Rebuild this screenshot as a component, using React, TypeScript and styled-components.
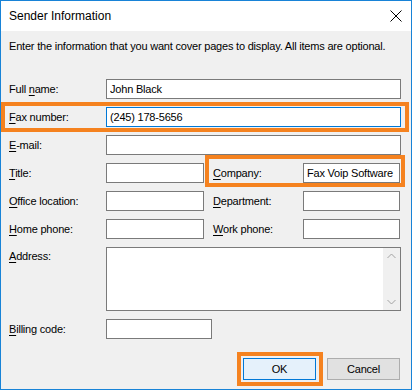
import React from "react";
import styled, { createGlobalStyle } from "styled-components";

const GlobalStyle = createGlobalStyle`
  body {
    margin: 0;
    font-family: "Liberation Sans", Arial, sans-serif;
    font-size: 11px;
    letter-spacing: -0.2px;
    color: #000;
    background: #fff;
  }
  * { box-sizing: border-box; }
`;

const Window = styled.div`
  width: 412px;
  height: 390px;
  border: 1px solid #1883d7;
  background: #f0f0f0;
  display: flex;
  flex-direction: column;
`;

const TitleBar = styled.div`
  height: 30px;
  background: #fff;
  display: flex;
  align-items: center;
  justify-content: space-between;
  padding: 0 9px 0 8px;
`;

const Title = styled.div`
  font-size: 12px;
  letter-spacing: 0;
`;

const CloseIcon = styled.svg`
  width: 12px;
  height: 12px;
  display: block;
`;

const Body = styled.div`
  flex: 1;
  padding: 7px 10px 0 8px;
  display: flex;
  flex-direction: column;
`;

const Intro = styled.p`
  margin: 0;
  line-height: 16px;
  white-space: nowrap;
`;

const Form = styled.div`
  margin-top: 25px;
  display: flex;
  flex-direction: column;
  gap: 8px;
`;

const Row = styled.div`
  display: flex;
`;

const Field = styled.div<{ $grow?: boolean }>`
  display: flex;
  align-items: center;
  flex: ${({ $grow }) => ($grow ? "1" : "none")};
`;

const Highlight = styled.div<{ $inset: string; $grow?: boolean }>`
  position: relative;
  display: flex;
  flex: ${({ $grow }) => ($grow ? "1" : "none")};

  &::after {
    content: "";
    position: absolute;
    inset: ${({ $inset }) => $inset};
    border: 4px solid #f5821f;
    pointer-events: none;
  }
`;

const Label = styled.label<{ $width: number; $indent?: number; $top?: boolean }>`
  width: ${({ $width }) => $width}px;
  padding-left: ${({ $indent }) => $indent ?? 0}px;
  flex: none;
  line-height: 16px;
  align-self: ${({ $top }) => ($top ? "flex-start" : "center")};
  padding-top: ${({ $top }) => ($top ? "1px" : "0")};
  white-space: nowrap;
`;

const Key = styled.u`
  text-decoration: underline;
  text-underline-offset: 2px;
`;

const TextBox = styled.input<{ $width?: number; $focused?: boolean }>`
  height: 20px;
  width: ${({ $width }) => ($width ? `${$width}px` : "auto")};
  flex: ${({ $width }) => ($width ? "none" : "1")};
  min-width: 0;
  border: 1px solid ${({ $focused }) => ($focused ? "#0078d7" : "#7a7a7a")};
  background: #fff;
  padding: 0 3px;
  margin: 0;
  font-family: "Liberation Sans", Arial, sans-serif;
  font-size: 11px;
  letter-spacing: -0.2px;
  color: #000;
  outline: none;
`;

const AddressBox = styled.div`
  flex: 1;
  height: 64px;
  border: 1px solid #7a7a7a;
  background: #fff;
  display: flex;
  justify-content: flex-end;
`;

const ScrollTrack = styled.div`
  width: 17px;
  background: #f0f0f0;
  display: flex;
  flex-direction: column;
  justify-content: space-between;
  align-items: center;
  padding: 5px 0;
`;

const Chevron = styled.svg`
  width: 9px;
  height: 6px;
  display: block;
`;

const Footer = styled.div`
  margin-top: 19px;
  display: flex;
  justify-content: flex-end;
  gap: 11px;
  padding-right: 1px;
`;

const Button = styled.button<{ $primary?: boolean }>`
  width: 73px;
  height: 22px;
  padding: 0;
  border: 1px solid ${({ $primary }) => ($primary ? "#0078d7" : "#adadad")};
  background: ${({ $primary }) => ($primary ? "#e5f1fb" : "#e1e1e1")};
  font-family: "Liberation Sans", Arial, sans-serif;
  font-size: 11px;
  letter-spacing: -0.2px;
  color: #000;
`;

const FULL_INSET = "-5px -8px -5px -8px";
const COMPANY_INSET = "-8px -5px -4px 1px";
const OK_INSET = "-6px -7px -6px -6px";

export default function App() {
  return (
    <>
      <GlobalStyle />
      <Window>
        <TitleBar>
          <Title>Sender Information</Title>
          <CloseIcon viewBox="0 0 12 12">
            <path d="M0.5 0.5 L11.5 11.5 M11.5 0.5 L0.5 11.5" stroke="#000" strokeWidth="1" />
          </CloseIcon>
        </TitleBar>
        <Body>
          <Intro>
            Enter the information that you want cover pages to display. All items are optional.
          </Intro>
          <Form>
            <Row>
              <Field $grow>
                <Label $width={97}>
                  Full <Key>n</Key>ame:
                </Label>
                <TextBox defaultValue="John Black" readOnly />
              </Field>
            </Row>
            <Row>
              <Highlight $inset={FULL_INSET} $grow>
                <Field $grow>
                  <Label $width={97}>
                    <Key>F</Key>ax number:
                  </Label>
                  <TextBox defaultValue="(245) 178-5656" readOnly $focused />
                </Field>
              </Highlight>
            </Row>
            <Row>
              <Field $grow>
                <Label $width={97}>
                  <Key>E</Key>-mail:
                </Label>
                <TextBox readOnly />
              </Field>
            </Row>
            <Row>
              <Field>
                <Label $width={97}>
                  <Key>T</Key>itle:
                </Label>
                <TextBox $width={98} readOnly />
              </Field>
              <Highlight $inset={COMPANY_INSET}>
                <Field>
                  <Label $width={99} $indent={9}>
                    <Key>C</Key>ompany:
                  </Label>
                  <TextBox $width={97} defaultValue="Fax Voip Software" readOnly />
                </Field>
              </Highlight>
            </Row>
            <Row>
              <Field>
                <Label $width={97}>
                  <Key>O</Key>ffice location:
                </Label>
                <TextBox $width={98} readOnly />
              </Field>
              <Field>
                <Label $width={99} $indent={9}>
                  <Key>D</Key>epartment:
                </Label>
                <TextBox $width={97} readOnly />
              </Field>
            </Row>
            <Row>
              <Field>
                <Label $width={97}>
                  <Key>H</Key>ome phone:
                </Label>
                <TextBox $width={98} readOnly />
              </Field>
              <Field>
                <Label $width={99} $indent={9}>
                  <Key>W</Key>ork phone:
                </Label>
                <TextBox $width={97} readOnly />
              </Field>
            </Row>
            <Row>
              <Field $grow>
                <Label $width={97} $top>
                  <Key>A</Key>ddress:
                </Label>
                <AddressBox>
                  <ScrollTrack>
                    <Chevron viewBox="0 0 9 6">
                      <path d="M0.5 5 L4.5 1 L8.5 5" fill="none" stroke="#a3a3a3" strokeWidth="1" />
                    </Chevron>
                    <Chevron viewBox="0 0 9 6">
                      <path d="M0.5 1 L4.5 5 L8.5 1" fill="none" stroke="#a3a3a3" strokeWidth="1" />
                    </Chevron>
                  </ScrollTrack>
                </AddressBox>
              </Field>
            </Row>
            <Row>
              <Field>
                <Label $width={97}>
                  <Key>B</Key>illing code:
                </Label>
                <TextBox $width={106} readOnly />
              </Field>
            </Row>
          </Form>
          <Footer>
            <Highlight $inset={OK_INSET}>
              <Button $primary>OK</Button>
            </Highlight>
            <Button>Cancel</Button>
          </Footer>
        </Body>
      </Window>
    </>
  );
}
